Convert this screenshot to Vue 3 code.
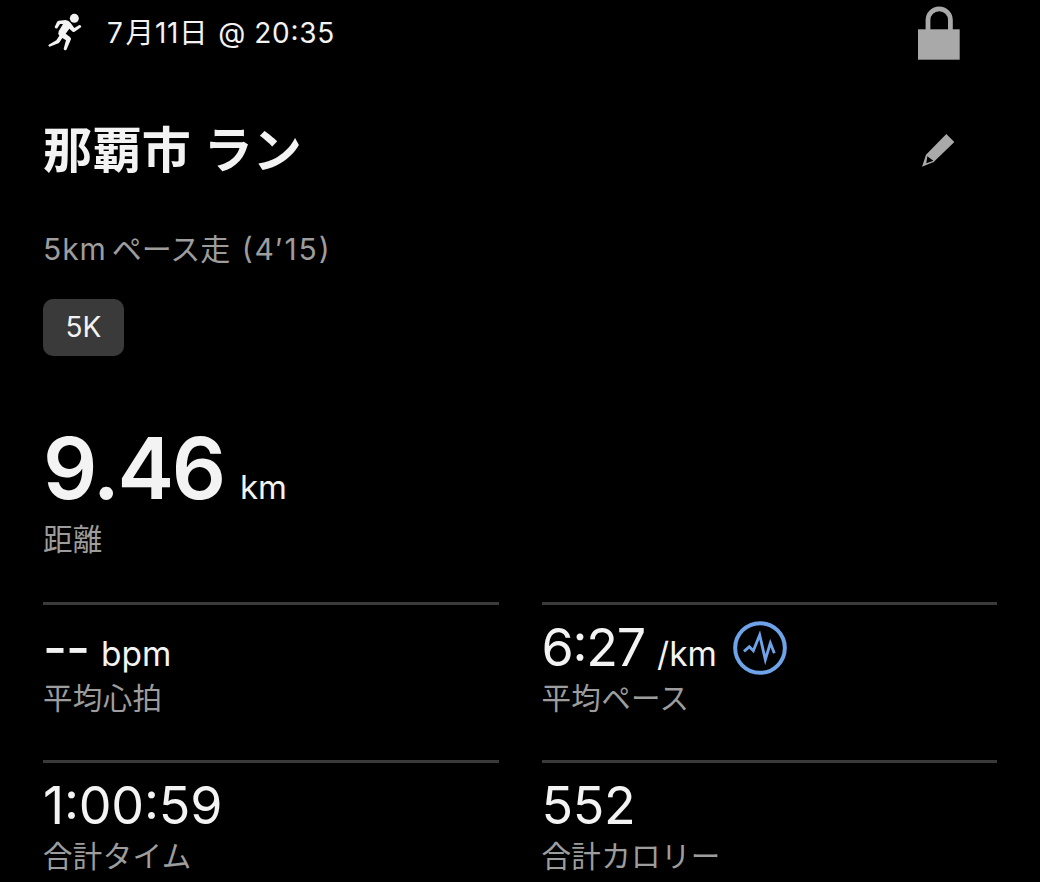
<script setup>
const stats = [
  { value: '--', unit: 'bpm', label: '平均心拍', kind: 'empty' },
  { value: '6:27', unit: '/km', label: '平均ペース', kind: 'pace', chart: true },
  { value: '1:00:59', label: '合計タイム', kind: 'time' },
  { value: '552', label: '合計カロリー', kind: 'calories' },
]
</script>

<template>
  <main class="activity">
    <header class="topbar">
      <svg class="runner" viewBox="0 0 150 165">
        <circle cx="103" cy="40" r="13.5" />
        <path d="M77 45L56 47Q53 48 51 51L44 66Q46 72 52 70L60 57L69 57L56 79Q53 87 58 92L49 106L26 119Q23 124 29 125L57 114L67 99L78 106L71 131Q73 138 79 135L93 103Q94 98 89 95L77 86L88 71L98 80Q102 82 106 79L124 66Q124 60 118 60L103 69L92 54Q87 46 77 45Z" />
      </svg>
      <div class="date"><span>7</span><span class="kanji month">月</span><span class="day">11</span><span class="kanji">日</span><span class="at">@</span><span class="clock">20:35</span></div>
      <svg class="lock" viewBox="0 0 42 54">
        <path class="shackle" d="M10 27V14a11.2 11.2 0 0 1 22.4 0V27" />
        <rect x="0" y="23.3" width="41.7" height="30.4" />
      </svg>
    </header>

    <section class="heading">
      <h1>那覇市<span class="run">ラン</span></h1>
      <svg class="pencil" viewBox="0 0 99 99">
        <path fill-rule="evenodd" d="M73 0L97 24L35 84L0 98L12 62ZM16 67L13 88L34 80Z" />
      </svg>
    </section>

    <p class="note"><span class="dist">5km</span><span class="pacerun">ペース走</span><span class="target">(4′15)</span></p>
    <div class="tag">5K</div>

    <section class="distance">
      <div class="total"><span class="total-value">9.46</span><span class="total-unit">km</span></div>
      <div class="label">距離</div>
    </section>

    <section class="grid">
      <div v-for="s in stats" :key="s.label" class="stat" :class="s.kind">
        <div class="row">
          <span class="value">{{ s.value }}</span>
          <span v-if="s.unit" class="unit">{{ s.unit }}</span>
          <svg v-if="s.chart" class="wave" viewBox="0 0 162 162">
            <circle cx="81" cy="81" r="74.5" />
            <polyline points="33,91 49,77 61,89 80,42 97,116 112,66 124,97" />
          </svg>
        </div>
        <div class="label">{{ s.label }}</div>
      </div>
    </section>
  </main>
</template>

<style>
html, body { margin: 0; background: #000; }
</style>

<style scoped>
.activity {
  box-sizing: border-box;
  width: 1040px;
  height: 882px;
  padding: 0 43px;
  overflow: hidden;
  background: #000;
  color: #f3f3f3;
  font-family: Inter, "Noto Sans CJK JP", sans-serif;
}
.topbar { display: flex; height: 66px; }
.runner { width: 50px; height: 55px; margin: 5px 0 0 -3px; fill: #f3f3f3; }
.date { display: flex; margin-left: 17px; line-height: 66px; font-size: 28px; letter-spacing: 0.6px; white-space: pre; }
.kanji { font-size: 28.5px; }
.month { margin: 0 0.5px 0 2px; }
.at { margin: 0 8.5px 0 10px; }
.clock { font-feature-settings: "case"; letter-spacing: 0.7px; }
.lock { width: 42px; height: 54px; margin: 6px 37px 0 auto; fill: #a9a9a9; }
.shackle { fill: none; stroke: #a9a9a9; stroke-width: 4.8; }
.heading { display: flex; align-items: flex-start; height: 154px; }
h1 { margin: 52px 0 0; font-size: 49px; line-height: 66px; font-weight: 700; letter-spacing: 0.4px; }
.run { margin-left: 12.5px; letter-spacing: 0; }
.pencil { width: 33px; height: 33px; margin: 68px 42px 0 auto; fill: #a9a9a9; }
.note { display: flex; height: 60px; margin: 0; line-height: 59px; font-size: 30px; color: #9d9d9d; }
.dist { letter-spacing: 0.9px; }
.pacerun { margin-left: 5px; line-height: 58px; }
.target { margin-left: 11.5px; letter-spacing: 1.9px; font-feature-settings: "case"; }
.tag {
  width: 81px;
  height: 56.5px;
  margin-top: 19px;
  margin-bottom: 0.5px;
  border-radius: 10px;
  background: #3a3a3a;
  font-size: 28px;
  line-height: 57px;
  text-align: center;
}
.distance { height: 246px; }
.total { display: flex; align-items: baseline; height: 163px; padding-top: 81px; box-sizing: border-box; line-height: 64px; }
.total-value { font-size: 85px; font-weight: 600; letter-spacing: -2.3px; }
.total-unit { margin-left: 16px; font-size: 33px; }
.label { font-size: 29.5px; line-height: 40px; letter-spacing: 0.35px; color: #9d9d9d; white-space: nowrap; }
.grid { display: grid; grid-template-columns: 455.5px 455.5px; column-gap: 43px; grid-auto-rows: 158px; }
.stat { border-top: 3px solid #3a3a3a; }
.row { display: flex; align-items: baseline; height: 73px; line-height: 86px; }
.value { font-size: 52px; letter-spacing: -0.4px; }
.empty .value { font-weight: 500; letter-spacing: -1px; }
.pace .value { font-feature-settings: "case"; letter-spacing: -1.2px; }
.time .value { font-feature-settings: "case"; letter-spacing: -0.2px; }
.unit { margin-left: 12px; font-size: 33.5px; }
.wave { align-self: flex-start; width: 54px; height: 54px; margin: 15.5px 0 0 16.5px; fill: none; stroke: #6fa3e9; }
.wave circle { stroke-width: 12; }
.wave polyline { stroke-width: 8.5; stroke-miterlimit: 20; }
</style>
